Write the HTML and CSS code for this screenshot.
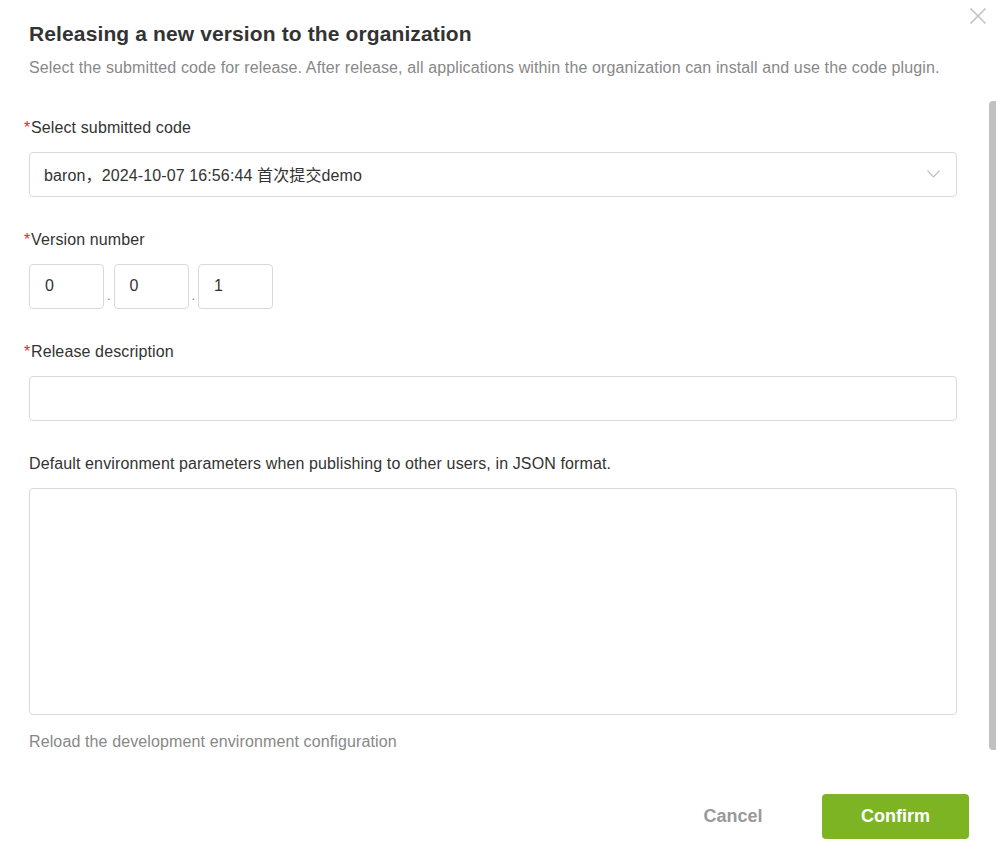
FILE: index.html
```html
<!DOCTYPE html>
<html>
<head>
<meta charset="utf-8">
<link rel="stylesheet" href="styles.css">
</head>
<body>
<div class="dialog">
  <button class="close" aria-label="close">
    <svg width="18" height="18" viewBox="0 0 18 18"><path d="M1.5 1.5 L16.5 16.5 M16.5 1.5 L1.5 16.5" stroke="#c2c2c2" stroke-width="1.6" fill="none"/></svg>
  </button>
  <div class="header">
    <div class="title">Releasing a new version to the organization</div>
    <div class="subtitle">Select the submitted code for release. After release, all applications within the organization can install and use the code plugin.</div>
  </div>
  <div class="body">
    <div class="form">
      <div class="field">
        <div class="label"><span class="req">*</span>Select submitted code</div>
        <div class="select">
          <span class="select-text">baron，2024-10-07 16:56:44 首次提交demo</span>
          <svg class="chev" width="13" height="8" viewBox="0 0 13 8"><path d="M0.5 0.7 L6.5 7 L12.5 0.7" stroke="#bdbdbd" stroke-width="1.2" fill="none"/></svg>
        </div>
      </div>
      <div class="field">
        <div class="label"><span class="req">*</span>Version number</div>
        <div class="version">
          <div class="vbox">0</div><span class="dot">.</span>
          <div class="vbox">0</div><span class="dot">.</span>
          <div class="vbox">1</div>
        </div>
      </div>
      <div class="field">
        <div class="label"><span class="req">*</span>Release description</div>
        <div class="input"></div>
      </div>
      <div class="field">
        <div class="label">Default environment parameters when publishing to other users, in JSON format.</div>
        <div class="textarea"></div>
      </div>
      <div class="reload">Reload the development environment configuration</div>
    </div>
    <div class="scrollbar"></div>
  </div>
  <div class="footer">
    <button class="btn cancel">Cancel</button>
    <button class="btn confirm">Confirm</button>
  </div>
</div>
</body>
</html>
```
FILE: styles.css
```css
html, body {
  margin: 0;
  padding: 0;
  background: #fff;
}
body {
  font-family: "Liberation Sans", Arial, "Noto Sans CJK SC", sans-serif;
  color: #333;
  letter-spacing: 0.12px;
}
.dialog {
  position: relative;
  width: 996px;
  height: 859px;
  overflow: hidden;
}
.close {
  position: absolute;
  top: 7px;
  right: 9px;
  width: 18px;
  height: 18px;
  padding: 0;
  border: 0;
  background: none;
  cursor: pointer;
}
.close svg { display: block; }
.header {
  padding: 22px 29px 0;
}
.title {
  font-size: 21px;
  line-height: 24px;
  font-weight: bold;
  color: #333;
}
.subtitle {
  margin-top: 12px;
  font-size: 16px;
  line-height: 20px;
  color: #888;
}
.body {
  position: relative;
  padding: 39px 0 0 29px;
}
.form {
  width: 928px;
  display: flex;
  flex-direction: column;
  gap: 32px;
}
.field {
  display: flex;
  flex-direction: column;
  gap: 14px;
}
.label {
  font-size: 16px;
  line-height: 20px;
  padding-top: 1px;
  color: #333;
}
.req {
  color: #f5222d;
  margin-left: -5px;
  display: inline-block;
  width: 7px;
}
.select {
  box-sizing: border-box;
  height: 45px;
  border: 1px solid #d9d9d9;
  border-radius: 4px;
  display: flex;
  align-items: center;
  justify-content: space-between;
  padding: 0 16px 1px 14px;
  font-size: 16px;
}
.select-text { color: #333; }
.chev { display: block; }
.version {
  display: flex;
  align-items: flex-end;
}
.vbox {
  box-sizing: border-box;
  width: 75px;
  height: 45px;
  border: 1px solid #d9d9d9;
  border-radius: 4px;
  display: flex;
  align-items: center;
  padding-left: 15px;
  padding-bottom: 1px;
  font-size: 16px;
  color: #333;
}
.dot {
  width: 9.5px;
  text-align: center;
  font-size: 13px;
  line-height: 14px;
  margin-bottom: 6px;
  color: #777;
  letter-spacing: 0;
}
.input {
  box-sizing: border-box;
  height: 45px;
  border: 1px solid #d9d9d9;
  border-radius: 4px;
}
.textarea {
  box-sizing: border-box;
  height: 227px;
  border: 1px solid #d9d9d9;
  border-radius: 4px;
}
.reload {
  margin-top: -15px;
  font-size: 16px;
  line-height: 20px;
  color: #888;
}
.scrollbar {
  position: absolute;
  right: 0;
  top: 23px;
  width: 7px;
  height: 649px;
  background: #c1c1c1;
  border-radius: 4px 0 0 4px;
}
.footer {
  display: flex;
  justify-content: flex-end;
  align-items: center;
  gap: 30px;
  padding: 42px 27px 0 0;
}
.btn {
  font-family: "Liberation Sans", Arial, sans-serif;
  font-size: 18px;
  font-weight: bold;
  border: 0;
  border-radius: 4px;
  height: 45px;
  cursor: pointer;
}
.cancel {
  width: 118px;
  background: transparent;
  color: #999;
}
.confirm {
  width: 147px;
  background: #7db424;
  color: #fff;
}
```
